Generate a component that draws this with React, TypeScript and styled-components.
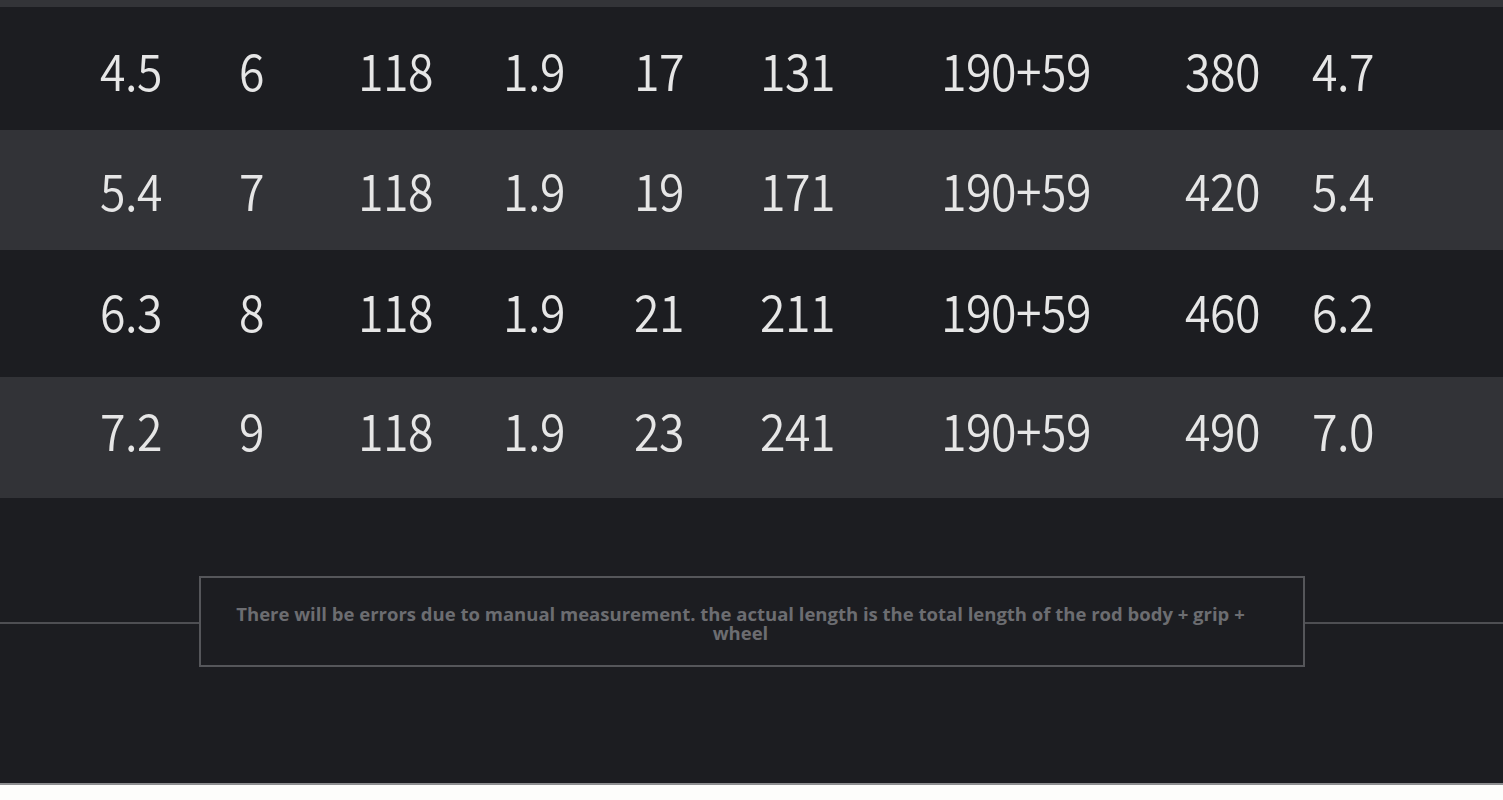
import React from "react";
import styled, { createGlobalStyle } from "styled-components";

const Global = createGlobalStyle`
  html, body { margin: 0; padding: 0; background: #fdfdfb; }
  body { width: 1503px; height: 800px; overflow: hidden; }
`;

const Page = styled.div`
  width: 1503px;
  height: 783px;
  background: #1c1d21;
  display: flex;
  flex-direction: column;
  border-bottom: 2px solid #8d8e90;
`;

const TopStrip = styled.div`
  height: 7px;
  background: #333438;
`;

const Row = styled.div<{ $striped: boolean; $h: number; $shift: number }>`
  height: ${(p) => p.$h}px;
  background: ${(p) => (p.$striped ? "#323337" : "#1c1d21")};
  display: grid;
  grid-template-columns: 139px 119px 145px 131px 126px 181px 244px 127px 1fr;
  align-items: center;
  padding-left: 100px;
  padding-top: ${(p) => Math.max(0, p.$shift * 2)}px;
  padding-bottom: ${(p) => Math.max(0, -p.$shift * 2)}px;
  box-sizing: border-box;
`;

const Cell = styled.div`
  font-family: "Noto Sans CJK SC", "Noto Sans", sans-serif;
  font-weight: 350;
  font-size: 51px;
  color: #e6e6e6;
  line-height: 1;
  white-space: nowrap;
  letter-spacing: -0.5px;
  transform: scaleX(0.91);
  transform-origin: left center;
`;

const NoticeArea = styled.div`
  display: flex;
  align-items: center;
  margin-top: 78px;
`;

const Rule = styled.div`
  flex: 1;
  height: 2px;
  margin-top: 3px;
  background: #4e4f53;
`;

const NoticeBox = styled.div`
  width: 1106px;
  height: 91px;
  box-sizing: border-box;
  border: 2px solid #55565a;
  display: flex;
  align-items: center;
  justify-content: center;
  padding: 3px 52px 0 30px;
`;

const NoticeText = styled.p`
  margin: 0;
  font-family: "Open Sans", "Noto Sans", sans-serif;
  font-weight: 700;
  font-size: 18.5px;
  line-height: 19px;
  color: #6c6d71;
  text-align: center;
`;

const rows = [
  { h: 123, shift: 1, cells: ["4.5", "6", "118", "1.9", "17", "131", "190+59", "380", "4.7"] },
  { h: 120, shift: -0.5, cells: ["5.4", "7", "118", "1.9", "19", "171", "190+59", "420", "5.4"] },
  { h: 127, shift: -3, cells: ["6.3", "8", "118", "1.9", "21", "211", "190+59", "460", "6.2"] },
  { h: 121, shift: -8, cells: ["7.2", "9", "118", "1.9", "23", "241", "190+59", "490", "7.0"] },
];

export default function App() {
  return (
    <>
      <Global />
      <Page>
        <TopStrip />
        {rows.map((r, i) => (
          <Row key={i} $striped={i % 2 === 1} $h={r.h} $shift={r.shift}>
            {r.cells.map((c, j) => (
              <Cell key={j}>{c}</Cell>
            ))}
          </Row>
        ))}
        <NoticeArea>
          <Rule />
          <NoticeBox>
            <NoticeText>
              There will be errors due to manual measurement. the actual length is the total length of the rod body + grip + wheel
            </NoticeText>
          </NoticeBox>
          <Rule />
        </NoticeArea>
      </Page>
    </>
  );
}
